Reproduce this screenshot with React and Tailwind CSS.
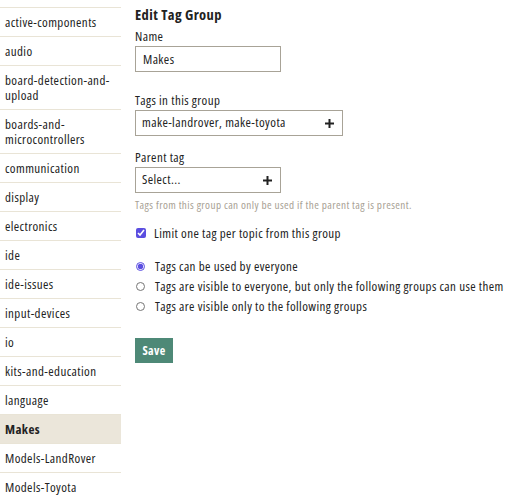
import { useState } from "react";

const tags = [
  { name: "active-components" },
  { name: "audio" },
  { name: "board-detection-and-upload" },
  { name: "boards-and-microcontrollers" },
  { name: "communication" },
  { name: "display" },
  { name: "electronics" },
  { name: "ide" },
  { name: "ide-issues" },
  { name: "input-devices" },
  { name: "io" },
  { name: "kits-and-education" },
  { name: "language" },
  { name: "Makes", active: true },
  { name: "Models-LandRover" },
  { name: "Models-Toyota" },
];

const Plus = () => (
  <svg width="11" height="11" viewBox="0 0 11 11" className="shrink-0">
    <path d="M5.5 1v9M1 5.5h9" stroke="#222" strokeWidth="2" />
  </svg>
);

const Label = ({ children }) => (
  <label className="block text-[13px] leading-[16px] text-[#222] mb-[2px]">{children}</label>
);

export default function App() {
  const [limit, setLimit] = useState(true);
  const [perm, setPerm] = useState("everyone");

  return (
    <div
      className="flex w-[514px] h-[500px] overflow-hidden bg-white text-[#222] font-stretch-condensed tracking-[0.4px]"
      style={{ fontFamily: '"Open Sans", sans-serif' }}
    >
      <ul className="w-[121px] shrink-0 pt-[7px]">
        {tags.map((t) => (
          <li
            key={t.name}
            className={`border-t border-[#e9e4d6] px-[5px] py-[6.5px] text-[13px] leading-[15px] ${
              t.active ? "bg-[#ebe6da] font-bold" : ""
            }`}
          >
            {t.name}
          </li>
        ))}
      </ul>

      <div className="ml-[14px] pt-[6px] flex flex-col">
        <h2 className="text-[14.5px] font-bold leading-[18px] mb-[4px]">Edit Tag Group</h2>

        <Label>Name</Label>
        <input
          defaultValue="Makes"
          className="w-[146px] h-[26px] border border-[#a8a397] px-[7px] text-[13px] outline-none font-stretch-condensed tracking-[0.4px]"
        />

        <div className="mt-[20px]">
          <Label>Tags in this group</Label>
          <div className="w-[208px] h-[26px] border border-[#a8a397] flex items-center justify-between pl-[6px] pr-[7px] text-[13px]">
            <span>make-landrover, make-toyota</span>
            <Plus />
          </div>
        </div>

        <div className="mt-[13px]">
          <Label>Parent tag</Label>
          <div className="w-[146px] h-[26px] border border-[#a8a397] flex items-center justify-between pl-[6px] pr-[7px] text-[13px]">
            <span>Select...</span>
            <Plus />
          </div>
          <p className="mt-[6px] text-[11.2px] leading-[12px] text-[#a8a194]">
            Tags from this group can only be used if the parent tag is present.
          </p>
        </div>

        <label className="mt-[14px] flex items-center gap-[8px] text-[13px] leading-[16px] pl-[1px]">
          <input
            type="checkbox"
            checked={limit}
            onChange={(e) => setLimit(e.target.checked)}
            className="w-[10px] h-[10px] m-0 accent-[#5b4ee0]"
          />
          Limit one tag per topic from this group
        </label>

        <div className="mt-[15px] flex flex-col pl-[1px]">
          {[
            ["everyone", "Tags can be used by everyone"],
            ["visible", "Tags are visible to everyone, but only the following groups can use them"],
            ["private", "Tags are visible only to the following groups"],
          ].map(([value, text]) => (
            <label key={value} className="flex items-center gap-[10px] text-[13px] leading-[20px] whitespace-nowrap">
              <input
                type="radio"
                name="perm"
                checked={perm === value}
                onChange={() => setPerm(value)}
                className="w-[9px] h-[9px] m-0 accent-[#5b4ee0]"
              />
              {text}
            </label>
          ))}
        </div>

        <button className="mt-[22px] self-start h-[25px] w-[38px] bg-[#4e8977] text-white font-bold text-[12px] font-stretch-condensed tracking-[0.4px]">
          Save
        </button>
      </div>
    </div>
  );
}
